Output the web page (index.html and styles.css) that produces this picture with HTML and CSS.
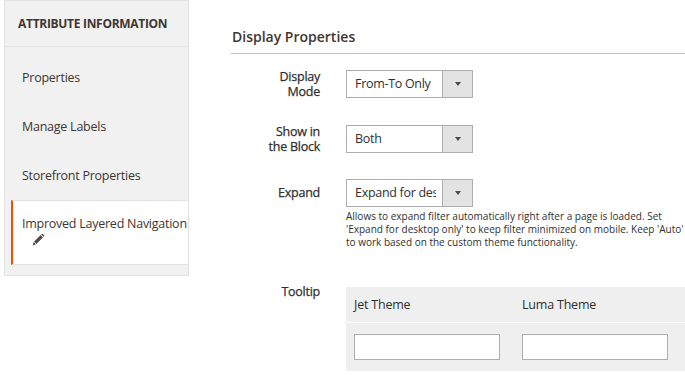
FILE: index.html
```html
<!DOCTYPE html>
<html lang="en">
<head>
  <meta charset="UTF-8">
  <meta name="viewport" content="width=device-width, initial-scale=1.0">
  <title>Attribute Information</title>
  <link rel="stylesheet" href="styles.css">
</head>
<body>
  <div class="page">
    <aside class="tabs">
      <div class="tabs-title">ATTRIBUTE INFORMATION</div>
      <ul class="tabs-list">
        <li class="tab"><a href="#">Properties</a></li>
        <li class="tab"><a href="#">Manage Labels</a></li>
        <li class="tab"><a href="#">Storefront Properties</a></li>
        <li class="tab active">
          <a href="#">Improved Layered Navigation</a>
          <svg class="tab-edit" width="13" height="13" viewBox="0 0 13 13">
            <polygon points="0.6,12.4 1.7,9.1 3.9,11.3" fill="#514943"/>
            <polygon points="2.1,8.6 8.6,2.1 10.9,4.4 4.4,10.9" fill="#514943"/>
            <polygon points="9.2,1.5 10.3,0.4 12.6,2.7 11.5,3.8" fill="#514943"/>
          </svg>
        </li>
      </ul>
    </aside>

    <main class="content">
      <h2 class="section-title">Display Properties</h2>

      <div class="field">
        <label class="field-label">Display<br>Mode</label>
        <div class="field-control">
          <div class="select"><span class="select-value">From-To Only</span><span class="select-arrow"></span></div>
        </div>
      </div>

      <div class="field">
        <label class="field-label">Show in<br>the Block</label>
        <div class="field-control">
          <div class="select"><span class="select-value">Both</span><span class="select-arrow"></span></div>
        </div>
      </div>

      <div class="field field-top">
        <label class="field-label field-label-single">Expand</label>
        <div class="field-control">
          <div class="select"><span class="select-value">Expand for desktop only</span><span class="select-arrow"></span></div>
          <div class="field-note">Allows to expand filter automatically right after a page is loaded. Set<br>'Expand for desktop only' to keep filter minimized on mobile. Keep 'Auto'<br>to work based on the custom theme functionality.</div>
        </div>
      </div>

      <div class="field field-top field-tooltip">
        <label class="field-label">Tooltip</label>
        <div class="field-control">
          <table class="themes">
            <thead>
              <tr><th>Jet Theme</th><th>Luma Theme</th></tr>
            </thead>
            <tbody>
              <tr>
                <td><input type="text" class="input-text"></td>
                <td><input type="text" class="input-text"></td>
              </tr>
            </tbody>
          </table>
        </div>
      </div>
    </main>
  </div>
</body>
</html>
```

FILE: styles.css
```css
body {
  margin: 0;
  font-family: 'Open Sans', 'Liberation Sans', sans-serif;
  color: #303030;
  background: #fff;
}
.page {
  display: flex;
  align-items: flex-start;
}

/* sidebar tabs */
.tabs {
  box-sizing: border-box;
  width: 185px;
  margin-left: 4px;
  background: #f1f1f1;
  border: 1px solid #e3e3e3;
}
.tabs-title {
  height: 45px;
  display: flex;
  align-items: center;
  padding-left: 13px;
  border-bottom: 1px solid #e3e3e3;
  font-size: 12px;
  font-weight: 700;
  letter-spacing: -0.3px;
  color: #41362f;
}
.tabs-list {
  list-style: none;
  margin: 0;
  padding: 6px 0 10px;
}
.tab {
  height: 49px;
  margin-left: 6px;
  padding-left: 9px;
  border-left: 2px solid transparent;
  display: flex;
  align-items: center;
}
.tab a {
  font-size: 12.5px;
  line-height: 16px;
  letter-spacing: -0.25px;
  color: #41362f;
  text-decoration: none;
}
.tab.active {
  height: auto;
  display: block;
  background: #fff;
  border-left-color: #eb5202;
  border-top: 1px solid #e3e3e3;
  border-bottom: 1px solid #e3e3e3;
  padding-top: 15px;
  padding-bottom: 18px;
}
.tab.active a {
  display: block;
}
.tab-edit {
  display: block;
  margin: 1px 0 0 10px;
}

/* main content */
.content {
  flex: 1;
  margin-left: 42px;
}
.section-title {
  margin: 27px 0 0;
  padding: 0 0 6px 1px;
  font-size: 14px;
  line-height: 20px;
  font-weight: 600;
  color: #41362f;
  border-bottom: 1px solid #cac3b4;
}
.field {
  display: flex;
  align-items: center;
  gap: 26px;
  margin-bottom: 25px;
}
.field:last-child {
  margin-bottom: 0;
}
.section-title + .field {
  margin-top: 15px;
}
.field-top {
  align-items: flex-start;
}
.field-label {
  width: 89px;
  flex: none;
  text-align: right;
  font-size: 12.5px;
  line-height: 15px;
  letter-spacing: -0.25px;
  -webkit-text-stroke: 0.25px #303030;
}
.field-label-single {
  line-height: 28px;
}
.field-tooltip {
  margin-top: 38px;
}
.field-tooltip .field-label {
  margin-top: -3px;
}
.field-control {
  flex: 1;
  min-width: 0;
}

/* select */
.select {
  box-sizing: border-box;
  width: 127px;
  height: 28px;
  display: flex;
  border: 1px solid #adadad;
  background: #fff;
}
.select-value {
  flex: 1;
  overflow: hidden;
  white-space: nowrap;
  margin: 0 6px 0 8px;
  font-size: 12.5px;
  line-height: 26px;
  letter-spacing: -0.3px;
}
.select-arrow {
  width: 29px;
  flex: none;
  border-left: 1px solid #adadad;
  background: #e3e3e3;
  display: flex;
  align-items: center;
  justify-content: center;
}
.select-arrow::after {
  content: "";
  border-left: 3.5px solid transparent;
  border-right: 3.5px solid transparent;
  border-top: 4px solid #514943;
}
.field-note {
  margin-top: 3px;
  font-size: 10px;
  line-height: 13px;
  color: #303030;
}

/* tooltip table */
.themes {
  width: 339px;
  border-collapse: collapse;
  background: #efefef;
}
.themes th {
  height: 35px;
  padding: 0 0 0 8px;
  text-align: left;
  font-size: 12.5px;
  font-weight: 400;
  letter-spacing: -0.2px;
  border-bottom: 1px solid #fff;
}
.themes th:first-child {
  width: 160px;
}
.themes td {
  height: 48px;
  padding: 0 0 0 8px;
}
.input-text {
  box-sizing: border-box;
  display: block;
  width: 146px;
  height: 26px;
  margin: 0;
  border: 1px solid #adadad;
  background: #fff;
}
```
